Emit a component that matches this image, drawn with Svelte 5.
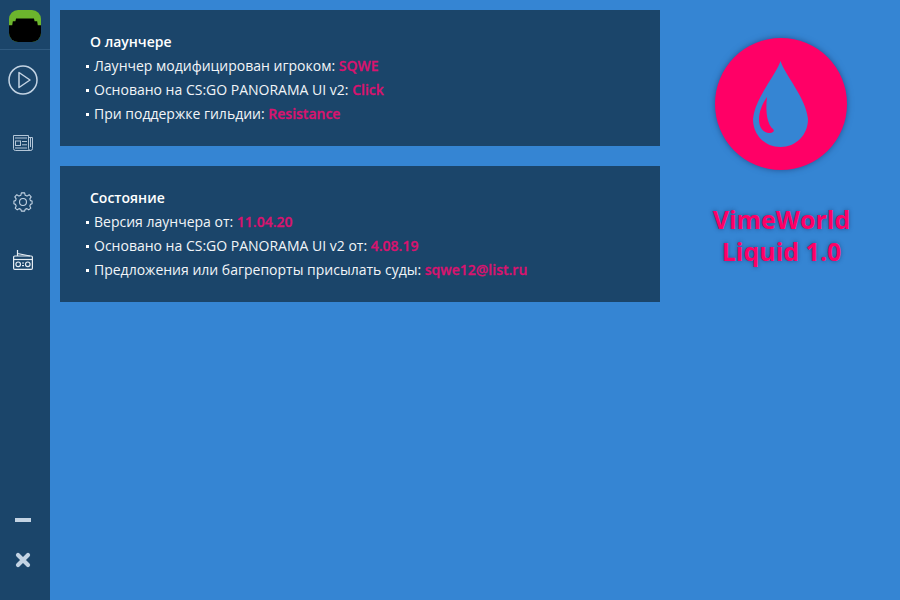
<script>
  const panels = [
    { title: 'О лаунчере', rows: [
      ['Лаунчер модифицирован игроком: ', 'SQWE'],
      ['Основано на CS:GO PANORAMA UI v2: ', 'Click'],
      ['При поддержке гильдии: ', 'Resistance']
    ]},
    { title: 'Состояние', rows: [
      ['Версия лаунчера от: ', '11.04.20'],
      ['Основано на CS:GO PANORAMA UI v2 от: ', '4.08.19'],
      ['Предложения или багрепорты присылать суды: ', 'sqwe12@list.ru']
    ]}
  ];
</script>

<div class="app">
  <aside class="side">
    <div class="avatar-wrap">
      <div class="avatar"><div class="hair"></div></div>
    </div>
    <nav class="nav">
      <svg class="play" width="30" height="30" viewBox="0 0 30 30" fill="none" stroke="#c3d3e3" stroke-width="1.5" stroke-linejoin="round">
        <circle cx="15" cy="15" r="14"/>
        <path d="M11 7.5 L22 15 L11 22.5 Z"/>
      </svg>
      <svg class="ic news" width="20" height="16" viewBox="0 0 20 16" fill="none" stroke="#b4c6d8" stroke-width="1">
        <path d="M0.5 0.5 H15.5 V13.5 Q15.5 15.5 17.5 15.5 H2.5 Q0.5 15.5 0.5 13.5 Z"/>
        <path d="M15.5 2.5 H19.5 V13.5 Q19.5 15.5 17.5 15.5"/>
        <path d="M17.5 2.5 V12"/>
        <path d="M2 3 H14 M2 13 H14 M9 6.5 H14 M9 9.8 H14"/>
        <rect x="2.5" y="6" width="5" height="4.5"/>
      </svg>
      <svg class="ic gear" width="20" height="20" viewBox="0 0 22 22" fill="none" stroke="#c3d3e3" stroke-width="1.2" stroke-linejoin="round">
        <circle cx="11" cy="11" r="3.8"/>
        <path d="M9.2 1 H12.8 L13.4 3.7 L15.4 4.5 L17.8 3 L20 5.4 L18.5 7.6 L19.2 9.5 L21 10 V13 L19.2 13.6 L18.5 15.4 L19.6 17.8 L17.3 19.6 L15.3 18.3 L13.4 19 L12.8 21 H9.2 L8.6 19 L6.7 18.3 L4.7 19.6 L2.4 17.8 L3.5 15.4 L2.8 13.6 L1 13 V10 L2.8 9.5 L3.5 7.6 L2 5.4 L4.2 3 L6.6 4.5 L8.6 3.7 Z"/>
      </svg>
      <svg class="ic radio" width="20" height="20" viewBox="0 0 20 20" fill="none" stroke="#e6edf3" stroke-width="1.2">
        <path d="M4.5 6 V0 M4.5 3.5 L17 6"/>
        <rect x="0.6" y="6" width="18.8" height="13.4" rx="1.2"/>
        <path d="M1 9.5 H19"/>
        <circle cx="5.2" cy="14.3" r="2.3"/>
        <circle cx="14.8" cy="14.3" r="2.3"/>
        <path d="M9 13 H11 M9 15.6 H11"/>
      </svg>
    </nav>
    <div class="win">
      <div class="min"></div>
      <svg width="16" height="16" viewBox="0 0 16 16" stroke="#c3d3e3" stroke-width="4.2" stroke-linecap="round">
        <path d="M3 3 L13 13 M13 3 L3 13"/>
      </svg>
    </div>
  </aside>

  <main class="main">
    <section class="col">
      {#each panels as p}
        <div class="panel">
          <h2>{p.title}</h2>
          {#each p.rows as r}
            <div class="row"><span class="dot"></span><span>{r[0]}<b>{r[1]}</b></span></div>
          {/each}
        </div>
      {/each}
    </section>
    <section class="brand">
      <svg class="logo" width="132" height="132" viewBox="0 0 132 132">
        <circle cx="66" cy="66" r="66" fill="#ff0066"/>
        <path d="M65.5 23 C 61 37 40 60 38 81 C 38 97 50 109 65.5 109 C 81 109 93 97 93 81 C 91 60 70 37 65.5 23 Z" fill="#3585d3"/>
        <path d="M52 59 C 47 66 44 74 44 82 C 44 90 49 95 54 95 C 58 95 60 93 58 91 C 53 87 50 76 52 59 Z" fill="#ff0066"/>
      </svg>
      <div class="name">VimeWorld<br>Liquid 1.0</div>
    </section>
  </main>
</div>

<style>
  :global(body) {
    margin: 0;
    background: #3585d3;
  }
  .app {
    display: flex;
    width: 900px;
    height: 600px;
    overflow: hidden;
    background: #3585d3;
    font-family: "Open Sans", sans-serif;
  }
  .side {
    width: 50px;
    flex: none;
    display: flex;
    flex-direction: column;
    align-items: center;
    background: #1b456a;
  }
  .avatar-wrap {
    width: 100%;
    height: 39px;
    border-bottom: 1px solid #2f5a80;
    display: flex;
    justify-content: center;
    padding-top: 10px;
  }
  .avatar {
    width: 32px;
    height: 32px;
    border-radius: 9px;
    background: #6cb52d;
    overflow: hidden;
    position: relative;
  }
  .hair {
    position: absolute;
    left: 0;
    right: 0;
    bottom: 0;
    height: 24px;
    background: #000;
    clip-path: polygon(0 100%, 0 30%, 10% 30%, 12% 14%, 20% 14%, 22% 2%, 78% 2%, 80% 14%, 88% 14%, 90% 30%, 100% 30%, 100% 100%);
  }
  .nav {
    display: flex;
    flex-direction: column;
    align-items: center;
    padding-top: 15px;
    margin-right: 4px;
  }
  .play { display: block; margin-bottom: 40px; }
  .ic { display: block; }
  .news { margin-bottom: 41px; }
  .gear { margin-bottom: 38px; }
  .win {
    margin-top: auto;
    margin-right: 4px;
    display: flex;
    flex-direction: column;
    align-items: center;
    padding-bottom: 32px;
    gap: 30px;
  }
  .min {
    width: 16px;
    height: 4px;
    background: #c3d3e3;
  }
  .win svg { display: block; }
  .main {
    flex: 1;
    display: flex;
    padding: 10px 0 0 10px;
  }
  .col {
    width: 600px;
    flex: none;
    display: flex;
    flex-direction: column;
    gap: 20px;
  }
  .panel {
    height: 136px;
    box-sizing: border-box;
    padding: 20px 0 0 26px;
    background: #1b456a;
    color: #fff;
    font-size: 14px;
    line-height: 24px;
  }
  h2 {
    margin: 0 0 0 4px;
    font-size: 14px;
    font-weight: 600;
    line-height: 24px;
  }
  .row {
    display: flex;
    align-items: center;
    color: #f2f5f8;
    white-space: pre;
  }
  .dot {
    width: 3px;
    height: 3px;
    background: #fff;
    margin-right: 5px;
  }
  b {
    font-weight: 600;
    color: #d9136f;
    -webkit-text-stroke: 0.3px #d9136f;
  }
  .brand {
    flex: 1;
    display: flex;
    flex-direction: column;
    align-items: center;
    padding-top: 28px;
    padding-left: 1px;
  }
  .logo {
    display: block;
    filter: drop-shadow(0 0 3px rgba(20, 40, 90, 0.55));
  }
  .name {
    margin-top: 33px;
    padding-left: 2px;
    font-size: 25px;
    font-weight: 700;
    line-height: 32px;
    text-align: center;
    color: #ff0066;
    text-shadow: 0 0 4px rgba(20, 40, 90, 0.6);
  }
</style>
